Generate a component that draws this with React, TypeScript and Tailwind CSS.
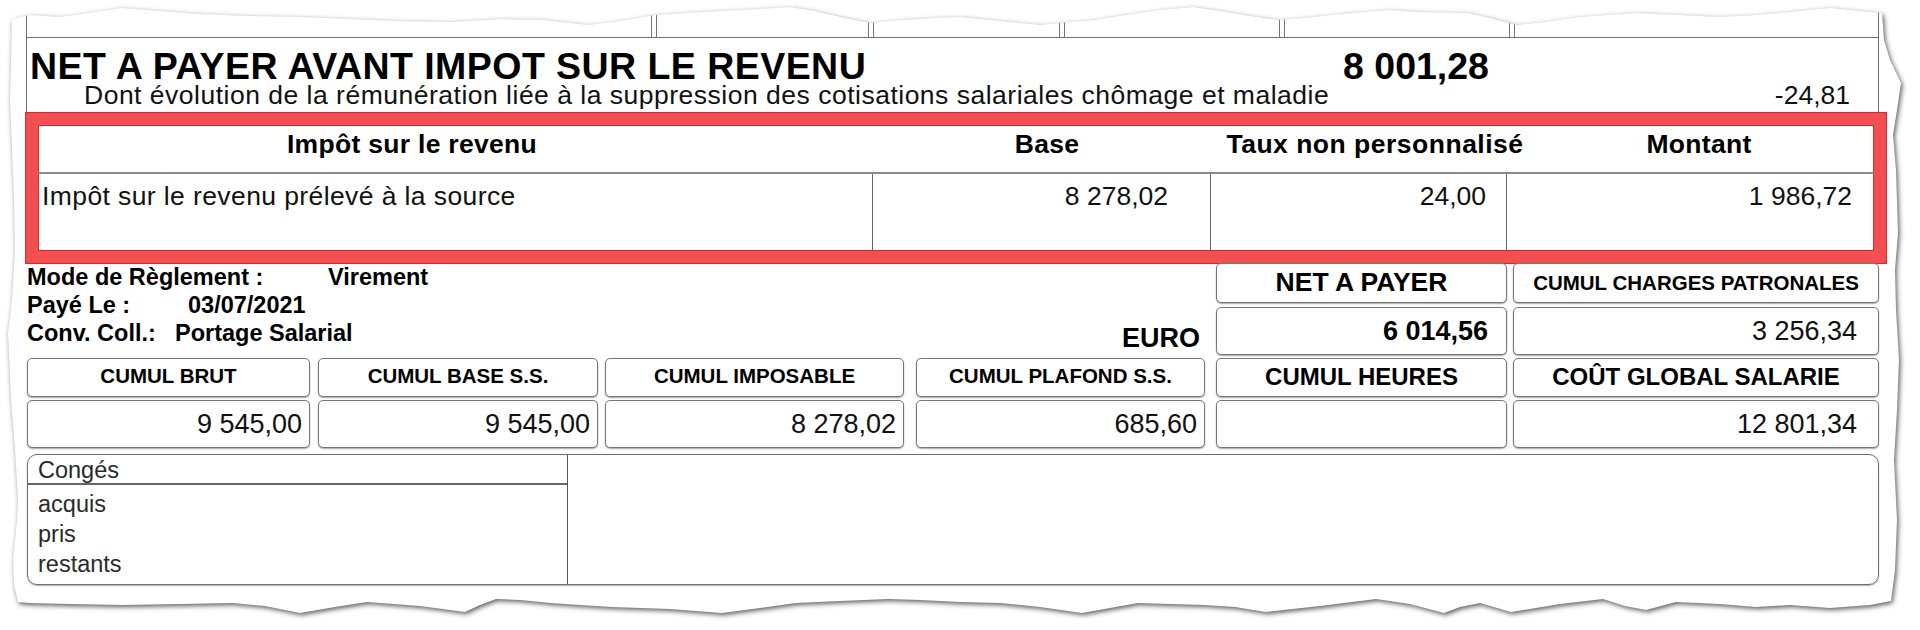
const FONT = "font-['Liberation_Sans',Arial,Helvetica,sans-serif]";

// torn paper outline, clockwise from the top left corner
const top = [[12,19],[30,15],[60,17],[95,12],[122,8],[160,11],[200,14],[250,16],[300,17],[350,19],[398,21],[450,22],[500,19],[545,20],[588,25],[620,21],[655,15],[686,13],[720,11],[760,9],[790,7],[815,11],[845,18],[870,23],[900,20],[935,18],[960,17],[1000,21],[1040,25],[1070,22],[1095,20],[1125,15],[1160,10],[1193,7],[1220,11],[1250,16],[1278,20],[1305,18],[1340,14],[1389,10],[1420,12],[1468,13],[1490,18],[1517,25],[1545,22],[1580,17],[1634,13],[1680,15],[1720,17],[1756,15],[1790,12],[1830,8],[1860,11],[1882,13]];
const right = [[1884,40],[1890,60],[1901,83],[1897,110],[1893,135],[1896,170],[1898,233],[1895,270],[1896,310],[1899,360],[1897,410],[1894,460],[1897,520],[1895,570],[1891,601]];
const bottom = [[1870,605],[1830,608],[1790,605],[1756,607],[1720,604],[1676,602],[1646,610],[1625,606],[1603,599],[1560,604],[1511,612],[1480,603],[1460,607],[1444,613],[1410,604],[1376,599],[1320,606],[1266,612],[1235,607],[1205,605],[1170,604],[1138,603],[1110,608],[1082,613],[1040,607],[1000,603],[960,602],[920,600],[888,599],[840,601],[796,603],[760,608],[722,613],[670,609],[612,607],[580,605],[551,603],[520,600],[496,599],[480,605],[465,612],[420,606],[367,602],[335,607],[300,613],[265,606],[233,603],[180,604],[122,605],[70,604],[30,603],[18,602]];
const left = [[14,585],[13,560],[17,520],[18,500],[15,450],[11,400],[8,333],[12,300],[15,250],[14,200],[12,150],[10,100],[11,60]];

const PAPER = "M" + [...top, ...right, ...bottom, ...left].map(([x, y]) => `${x},${y}`).join(" L") + " Z";
const OUTSIDE = `M0,0 H1920 V630 H0 Z ${PAPER}`;

function TornEdge() {
  return (
    <svg className="absolute inset-0 pointer-events-none" width="1920" height="630" viewBox="0 0 1920 630">
      <defs>
        <clipPath id="outside">
          <path d={OUTSIDE} clipRule="evenodd" />
        </clipPath>
        <filter id="soft" x="-5%" y="-5%" width="110%" height="110%">
          <feGaussianBlur stdDeviation="2.4" />
        </filter>
      </defs>
      <path d={OUTSIDE} fill="#fff" fillRule="evenodd" />
      <g clipPath="url(#outside)">
        <path d={PAPER} fill="#5a5a5a" filter="url(#soft)" transform="translate(1.5 2)" />
      </g>
    </svg>
  );
}

function Box({ className = "", children }: { className?: string; children?: React.ReactNode }) {
  return (
    <div
      className={`flex items-center whitespace-nowrap rounded-[5px] border-[1.5px] border-[#777] bg-white shadow-[0_1px_1.5px_rgba(0,0,0,0.35)] ${className}`}
    >
      {children}
    </div>
  );
}

const Divider = () => <div className="h-full w-[6px] border-x border-[#777]" />;

const cumuls = [
  { label: "CUMUL BRUT", value: "9 545,00", box: "w-[283px]" },
  { label: "CUMUL BASE S.S.", value: "9 545,00", box: "w-[280px] ml-[8px]" },
  { label: "CUMUL IMPOSABLE", value: "8 278,02", box: "w-[299px] ml-[7px]" },
  { label: "CUMUL PLAFOND S.S.", value: "685,60", box: "w-[289px] ml-[12px]" },
];

export default function App() {
  return (
    <div className={`relative h-[630px] w-[1920px] overflow-hidden bg-white text-[#111] ${FONT}`}>
      {/* tail of the previous table */}
      <div className="ml-[26px] flex h-[38px] w-[1853px] border-x border-b border-[#6e6e6e]">
        <div className="w-[624px]" />
        <Divider />
        <div className="w-[211px]" />
        <Divider />
        <div className="w-[185px]" />
        <Divider />
        <div className="w-[214px]" />
        <Divider />
        <div className="w-[224px]" />
        <Divider />
        <div className="flex-1" />
      </div>

      {/* net avant impot */}
      <div className="ml-[26px] h-[75px] w-[1853px] whitespace-nowrap border-x border-[#6e6e6e]">
        <div className="flex pl-[3px] pt-[12px] text-[37.5px] font-bold leading-[33px] text-black">
          <div className="w-[1313px] tracking-[0.45px]">NET A PAYER AVANT IMPOT SUR LE REVENU</div>
          <div>8 001,28</div>
        </div>
        <div className="flex justify-between pl-[57px] pr-[28px] text-[26.5px] leading-[24px] tracking-[0.5px]">
          <span>Dont évolution de la rémunération liée à la suppression des cotisations salariales chômage et maladie</span>
          <span className="tracking-normal">-24,81</span>
        </div>
      </div>

      {/* impot sur le revenu, highlighted */}
      <div className="ml-[26px] flex h-[150px] w-[1860px] flex-col whitespace-nowrap border-[12px] border-[#f34e50] bg-white shadow-[0_0_0_1px_#e0252a,inset_0_0_0_1px_#e0252a]">
        <div className="flex h-[49px] border-b-2 border-[#8a8a8a] pt-[5px] text-[26.5px] font-bold leading-[28px] tracking-[0.3px] text-black">
          <div className="flex w-[835px] justify-center pr-[87px]">Impôt sur le revenu</div>
          <div className="flex w-[338px] justify-center pl-[10px]">Base</div>
          <div className="flex w-[296px] justify-center pl-[32px] tracking-[0.5px]">Taux non personnalisé</div>
          <div className="flex flex-1 justify-center pl-[17px]">Montant</div>
        </div>
        <div className="flex flex-1 text-[26.5px] leading-[28px]">
          <div className="w-[835px] border-r border-[#666] pl-[4px] pt-[8px] tracking-[0.4px]">
            Impôt sur le revenu prélevé à la source
          </div>
          <div className="w-[338px] border-r border-[#666] pr-[42px] pt-[8px] text-right">8 278,02</div>
          <div className="w-[296px] border-r border-[#666] pr-[20px] pt-[8px] text-right">24,00</div>
          <div className="flex-1 pr-[22px] pt-[8px] text-right">1 986,72</div>
        </div>
      </div>

      {/* reglement + net a payer */}
      <div className="ml-[27px] flex h-[92px]">
        <div className="flex w-[1178px] flex-col whitespace-nowrap text-[23.5px] font-bold leading-[28px] text-black">
          <div>
            <span className="inline-block w-[301px]">Mode de Règlement :</span>
            <span>Virement</span>
          </div>
          <div>
            <span className="inline-block w-[161px]">Payé Le :</span>
            <span>03/07/2021</span>
          </div>
          <div className="flex justify-between pr-[5px]">
            <div>
              <span className="inline-block w-[148px]">Conv. Coll.:</span>
              <span>Portage Salarial</span>
            </div>
            <div className="mt-[5px] text-[27px]">EURO</div>
          </div>
        </div>
        <div className="ml-[11px] flex w-[291px] flex-col gap-[4px]">
          <Box className="h-[40px] justify-center text-[26.5px] font-bold text-black">NET A PAYER</Box>
          <Box className="h-[48px] justify-end pr-[18px] text-[27px] font-bold text-black">6 014,56</Box>
        </div>
        <div className="ml-[6px] flex w-[366px] flex-col gap-[4px]">
          <Box className="h-[40px] justify-center text-[20.5px] font-bold text-black">CUMUL CHARGES PATRONALES</Box>
          <Box className="h-[48px] justify-end pr-[21px] text-[27px]">3 256,34</Box>
        </div>
      </div>

      {/* cumuls */}
      <div className="ml-[27px] mt-[3px] flex">
        {cumuls.map((c) => (
          <div key={c.label} className={`flex flex-col gap-[3px] ${c.box}`}>
            <Box className="h-[39px] justify-center pb-[3px] text-[20.5px] font-bold text-black">{c.label}</Box>
            <Box className="h-[48px] justify-end pr-[7px] text-[27px]">{c.value}</Box>
          </div>
        ))}
        <div className="ml-[11px] flex w-[291px] flex-col gap-[3px]">
          <Box className="h-[39px] justify-center pb-[2px] text-[24px] font-bold text-black">CUMUL HEURES</Box>
          <Box className="h-[48px]" />
        </div>
        <div className="ml-[6px] flex w-[366px] flex-col gap-[3px]">
          <Box className="h-[39px] justify-center pb-[2px] text-[24px] font-bold text-black">COÛT GLOBAL SALARIE</Box>
          <Box className="h-[48px] justify-end pr-[21px] text-[27px]">12 801,34</Box>
        </div>
      </div>

      {/* conges */}
      <div className="ml-[27px] mt-[6px] flex h-[131px] w-[1852px] rounded-[10px] border-[1.5px] border-[#6e6e6e] shadow-[0_1px_1.5px_rgba(0,0,0,0.3)]">
        <div className="w-[540px] border-r-[1.5px] border-[#555] text-[23.5px] text-[#2a2a2a]">
          <div className="border-b-2 border-[#666] pl-[10px] pt-[3px] leading-[25px]">Congés</div>
          <div className="pl-[10px] pt-[3.5px] leading-[30px]">
            <div>acquis</div>
            <div>pris</div>
            <div>restants</div>
          </div>
        </div>
        <div className="flex-1" />
      </div>

      <TornEdge />
    </div>
  );
}
